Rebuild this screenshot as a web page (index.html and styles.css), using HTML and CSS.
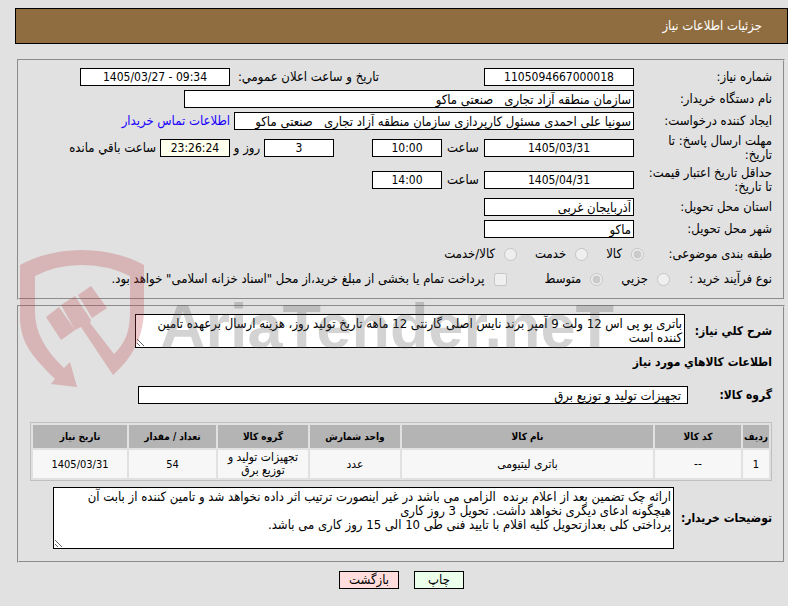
FILE: index.html
```html
<!DOCTYPE html>
<html lang="fa" dir="rtl">
<head>
    <meta charset="UTF-8">
    <title>جزئیات اطلاعات نیاز</title>
    <link rel="stylesheet" href="styles.css">
</head>
<body>
    <div class="header">جزئیات اطلاعات نیاز</div>

    <form class="content">
        <fieldset class="box">
            <div class="row">
                <label class="title" for="need-no">شماره نیاز:</label>
                <input class="field medium center" id="need-no" type="text" value="1105094667000018" readonly>
                <label class="announce" for="announce-date">تاریخ و ساعت اعلان عمومي:</label>
                <input class="field medium center" id="announce-date" type="text" dir="ltr" value="1405/03/27 - 09:34" readonly>
            </div>
            <div class="row">
                <label class="title" for="buyer">نام دستگاه خریدار:</label>
                <input class="field wide" id="buyer" type="text" value="سازمان منطقه آزاد تجاری &nbsp; صنعتی ماکو" readonly>
            </div>
            <div class="row">
                <label class="title" for="creator">ایجاد کننده درخواست:</label>
                <input class="field long" id="creator" type="text" value="سونیا علی احمدی مسئول کارپردازی سازمان منطقه آزاد تجاری &nbsp; صنعتی ماکو" readonly>
                <a class="contact" href="#">اطلاعات تماس خریدار</a>
            </div>
            <div class="row">
                <label class="title" for="answer-date">مهلت ارسال پاسخ: تا<br>تاریخ:</label>
                <input class="field medium center" id="answer-date" type="text" value="1405/03/31" readonly>
                <label class="hour" for="answer-hour">ساعت</label>
                <input class="field small center" id="answer-hour" type="text" value="10:00" readonly>
                <input class="field small center days" id="days" type="text" value="3" readonly>
                <label class="day" for="days">روز و</label>
                <input class="field small center remain" id="remain" type="text" value="23:26:24" readonly>
                <label class="after" for="remain">ساعت باقي مانده</label>
            </div>
            <div class="row">
                <label class="title" for="price-date">حداقل تاریخ اعتبار قیمت:<br>تا تاریخ:</label>
                <input class="field medium center" id="price-date" type="text" value="1405/04/31" readonly>
                <label class="hour" for="price-hour">ساعت</label>
                <input class="field small center" id="price-hour" type="text" value="14:00" readonly>
            </div>
            <div class="row">
                <label class="title" for="province">استان محل تحویل:</label>
                <input class="field medium" id="province" type="text" value="آذربایجان غربی" readonly>
            </div>
            <div class="row">
                <label class="title" for="city">شهر محل تحویل:</label>
                <input class="field medium" id="city" type="text" value="ماکو" readonly>
            </div>
            <div class="row options">
                <span class="option-title kind">طبقه بندی موضوعی:</span>
                <label class="option"><input type="radio" name="kind" checked disabled>کالا</label>
                <label class="option"><input type="radio" name="kind" disabled>خدمت</label>
                <label class="option"><input type="radio" name="kind" disabled>کالا/خدمت</label>
            </div>
            <div class="row options">
                <span class="option-title">نوع فرآیند خرید :</span>
                <label class="option"><input type="radio" name="process" disabled>جزیي</label>
                <label class="option"><input type="radio" name="process" checked disabled>متوسط</label>
                <label class="option pay"><input type="checkbox" disabled>پرداخت تمام یا بخشی از مبلغ خرید،از محل "اسناد خزانه اسلامی" خواهد بود.</label>
            </div>
        </fieldset>

        <fieldset class="box goods">
            <div class="row">
                <label class="bold" for="summary">شرح کلي نیاز:</label>
                <textarea class="field summary" id="summary" readonly>باتری یو پی اس 12 ولت 9 آمپر برند نایس اصلی گارنتی 12 ماهه تاریخ تولید روز، هزینه ارسال برعهده تامین
کننده است</textarea>
            </div>
            <h2>اطلاعات کالاهاي مورد نیاز</h2>
            <div class="row">
                <label class="bold" for="group">گروه کالا:</label>
                <input class="field group" id="group" type="text" value="تجهیزات تولید و توزیع برق" readonly>
            </div>
            <table class="items">
                <colgroup>
                    <col class="c-row"><col class="c-code"><col><col class="c-unit"><col class="c-group"><col class="c-count"><col class="c-date">
                </colgroup>
                <thead>
                    <tr>
                        <th>ردیف</th>
                        <th>کد کالا</th>
                        <th>نام کالا</th>
                        <th>واحد شمارش</th>
                        <th>گروه کالا</th>
                        <th>تعداد / مقدار</th>
                        <th>تاریخ نیاز</th>
                    </tr>
                </thead>
                <tbody>
                    <tr>
                        <td class="num">1</td>
                        <td>--</td>
                        <td>باتری لیتیومی</td>
                        <td>عدد</td>
                        <td>تجهیزات تولید و<br>توزیع برق</td>
                        <td class="num">54</td>
                        <td class="num">1405/03/31</td>
                    </tr>
                </tbody>
            </table>
            <div class="row">
                <label class="bold" for="notes">توضیحات خریدار:</label>
                <textarea class="field notes" id="notes" readonly>ارائه چک تضمین بعد از اعلام برنده  الزامی می باشد در غیر اینصورت ترتیب اثر داده نخواهد شد و تامین کننده از بابت آن
هیچگونه ادعای دیگری نخواهد داشت. تحویل 3 روز کاری
پرداختی کلی بعدازتحویل کلیه اقلام با تایید فنی طی 10 الی 15 روز کاری می باشد.</textarea>
            </div>
        </fieldset>

        <div class="buttons">
            <button class="btn print" type="button">چاپ</button>
            <button class="btn back" type="button">بازگشت</button>
        </div>
    </form>

    <div class="watermark" dir="ltr">
        <svg class="shield" width="126" height="138" viewBox="0 0 126 138" aria-hidden="true">
            <path d="M0 15Q28 0 62 0Q96 0 124 15V57C124 86 114 106 93 125L61 77L55 80L41 55L55 46L71 70L70 73L94 104C106 93 110 80 110 62V26Q88 15 62 15Q36 15 15 26V62C15 82 25 100 44 118L50 112L57 137L31 134L35 129C10 104 0 92 0 65Z"/>
            <path d="M26 67L39 57L55 80L41 90Z"/>
            <path d="M58 45L71 36L87 58L72 68Z"/>
        </svg>
        <span class="mark-text">AriaTender.neT</span>
    </div>
</body>
</html>
```

FILE: styles.css
```css
body {
    margin: 8px 0 0;
    padding-left: 15px;
    background-color: #e1e1e1;
    color: #000;
    font-family: "DejaVu Sans Condensed", "DejaVu Sans", Tahoma, sans-serif;
    font-size: 13px;
    line-height: 14px;
}
.header {
    padding: 10px 25px;
    border: 1px solid #000;
    background-color: #8f6d40;
    color: #fff;
    margin-bottom: 15px;
}
.content {
    margin: 0;
}
.box {
    border: 2px groove #e0e0e0;
    margin: 0 3px 5px 2px;
    padding: 7px 11px 6px;
    min-width: 0;
}
.row {
    display: flex;
    align-items: center;
    margin-bottom: 4px;
    white-space: nowrap;
}
.title {
    width: 138px;
    flex: none;
}
.field {
    box-sizing: border-box;
    height: 18px;
    flex: none;
    margin: 0;
    padding: 0 2px;
    border: 1px solid #000;
    border-radius: 0;
    background-color: #fff;
    color: #000;
    font-family: inherit;
    font-size: 13px;
    line-height: 14px;
}
.center {
    text-align: center;
    font-size: 12px;
}
.small {
    width: 70px;
}
.medium {
    width: 150px;
}
.long {
    width: 400px;
}
.wide {
    width: 450px;
}
.announce {
    width: 149px;
    margin-right: 105px;
}
.hour {
    width: 42px;
    text-align: center;
}
.day {
    width: 34px;
    text-align: center;
}
.days {
    margin-right: 38px;
}
.remain {
    background-color: #ffffee;
}
.contact,
.after {
    margin-right: 4px;
}
.contact {
    color: #1a00ff;
    text-decoration: none;
}
.options {
    height: 24px;
    margin-bottom: 1px;
}
.option-title {
    width: 102px;
}
.kind {
    width: 128px;
}
.option {
    display: flex;
    align-items: center;
    gap: 9px;
    margin-left: 18px;
}
.option input {
    margin: 0;
}
.pay {
    margin-right: 20px;
}
.bold {
    font-weight: bold;
    flex: none;
    font-size: 12px;
}
textarea.field {
    padding: 2px;
    resize: both;
    overflow: hidden;
    white-space: pre-wrap;
}
.goods {
    padding-bottom: 8px;
}
.goods .row {
    justify-content: space-between;
}
textarea.summary {
    width: 550px;
    height: 34px;
    margin-left: 105px;
}
.group {
    width: 550px;
    margin-left: 108px;
    padding-right: 6px;
}
textarea.notes {
    width: 621px;
    height: 62px;
    margin-left: 23px;
}
h2 {
    margin: 7px 0 17px;
    font-size: 12px;
    line-height: 14px;
}
.items {
    width: 100%;
    margin: 18px 0 6px;
    table-layout: fixed;
    border: 1px solid #bfbfbf;
    border-spacing: 2px;
    text-align: center;
}
.items th {
    height: 23px;
    padding: 0;
    background-color: #b4b4b4;
    font-size: 10px;
}
.items td {
    height: 28px;
    padding: 0;
    background-color: #f7f7f7;
    font-size: 12px;
    line-height: 13px;
}
.items .num {
    font-size: 11px;
}
.c-row {
    width: 26px;
}
.c-code {
    width: 86px;
}
.c-unit {
    width: 90px;
}
.c-group {
    width: 90px;
}
.c-count {
    width: 87px;
}
.c-date {
    width: 94px;
}
.buttons {
    display: flex;
    justify-content: center;
    gap: 15px;
    margin-top: 8px;
}
.btn {
    height: 18px;
    padding: 0;
    border: 1px solid #000;
    font-family: inherit;
    font-size: 13px;
    line-height: 14px;
}
.print {
    width: 50px;
    background-color: #ebffeb;
}
.back {
    width: 60px;
    background-color: #ffdddd;
}
/* site mark over the form */
.watermark {
    position: absolute;
    left: 20px;
    top: 250px;
    display: flex;
    align-items: center;
    gap: 14px;
    pointer-events: none;
}
.shield {
    fill: rgba(190, 60, 65, 0.27);
}
.mark-text {
    margin-top: 14px;
    color: rgba(80, 80, 80, 0.25);
    font-family: "Liberation Sans", sans-serif;
    font-size: 63px;
    font-weight: bold;
    line-height: 64px;
}
```
